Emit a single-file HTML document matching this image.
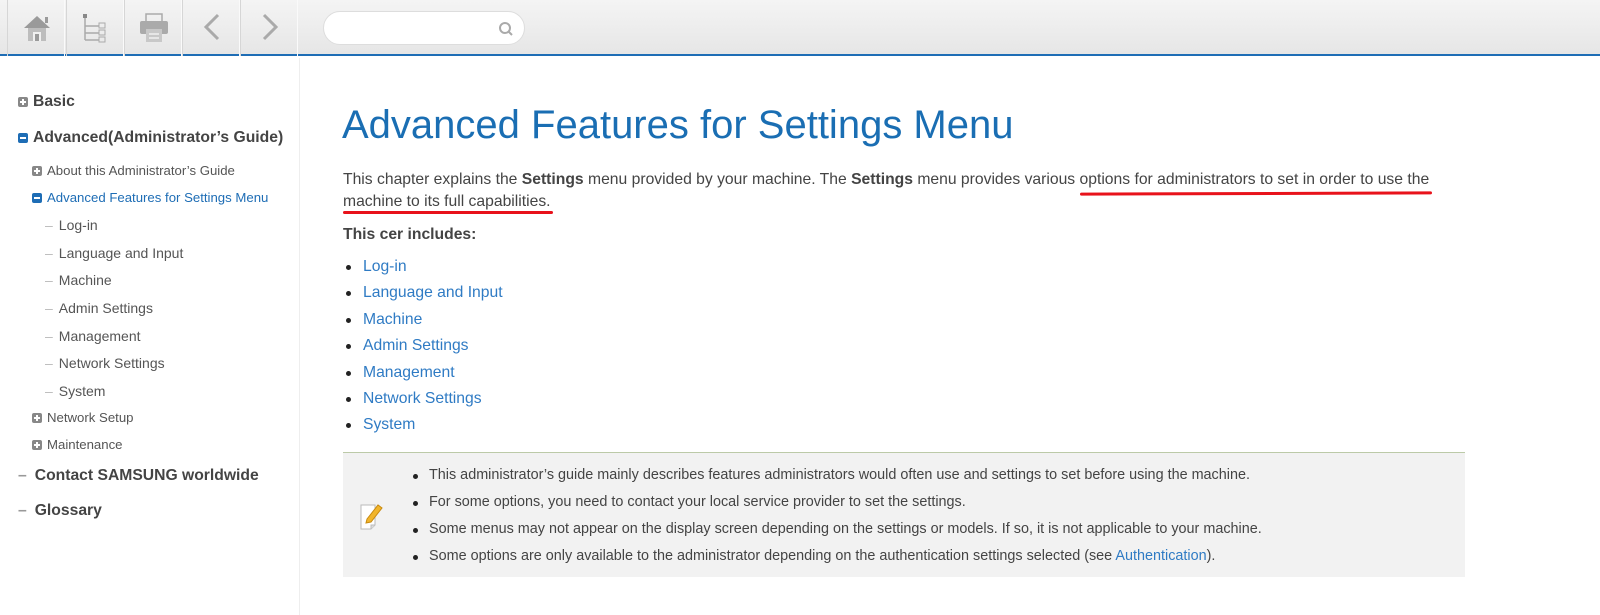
<!DOCTYPE html>
<html><head><meta charset="utf-8"><style>
*{margin:0;padding:0;box-sizing:border-box}
body{width:1600px;height:615px;overflow:hidden;background:#fff;font-family:"Liberation Sans",Arial,sans-serif;color:#444;position:relative}
.tb{position:absolute;left:0;top:0;width:1600px;height:56px;background:linear-gradient(#f4f4f4,#e6e6e6);border-bottom:2px solid #1e6db5}
.btn{position:absolute;top:0;height:56px;width:58px;border-left:1px solid #d6d6d6;border-right:1px solid #fafafa}
.btn svg{position:absolute;left:13px;top:11px}
.search{position:absolute;left:323px;top:11px;width:202px;height:34px;border-radius:17px;background:#fff;border:1px solid #ddd}
.side{position:absolute;left:0;top:58px;width:300px;height:557px;border-right:1px solid #eee}
.it{position:absolute;white-space:nowrap}
.b{font-weight:bold;font-size:15.7px;color:#444}
.s{font-size:13.2px;color:#555}
.ico{display:inline-block;width:10px;height:10px;border-radius:2px;background:#888;position:relative;margin-right:5px;vertical-align:-1px}
.ico:after{content:"";position:absolute;left:2px;top:4px;width:6px;height:2px;background:#fff}
.plus:before{content:"";position:absolute;left:4px;top:2px;width:2px;height:6px;background:#fff}
.blue{background:#1e6db5}
h1{position:absolute;left:342px;top:103px;font-size:40px;font-weight:normal;color:#1a6eb3;white-space:nowrap}
.p{position:absolute;left:343px;font-size:15.7px;color:#444;white-space:nowrap}
a{color:#2f7bc4;text-decoration:none}
ul.l{position:absolute;left:343px;top:257px;list-style:none;font-size:15.7px}
ul.l li{height:26.4px;line-height:20px;position:relative;padding-left:20px}
ul.l li:before{content:"";position:absolute;left:3px;top:8px;width:5px;height:5px;border-radius:50%;background:#222}
.note{position:absolute;left:343px;top:452px;width:1122px;height:125px;background:#f2f2f2;border-top:1px solid #bccaa8}
.note ul{position:absolute;left:68px;top:14px;list-style:none;font-size:14.4px;color:#444}
.note li{height:27px;position:relative;padding-left:18px;white-space:nowrap}
.note li:before{content:"";position:absolute;left:2px;top:7px;width:5px;height:5px;border-radius:50%;background:#222}
.red{position:absolute;height:3px;background:#e8121b;border-radius:2px}
</style></head><body>
<div class="tb">
<div class="btn" style="left:7px"><svg width="32" height="34" viewBox="0 0 32 34"><path d="M3 17 L16 5 L29 17 Z" fill="#9a9a9a"/><rect x="24" y="6" width="3" height="6" fill="#9a9a9a"/><rect x="7" y="17" width="18" height="13" fill="#bdbdbd"/><rect x="12" y="21" width="8" height="9" fill="#f0f0f0"/><rect x="14" y="23" width="4" height="7" fill="#9a9a9a"/></svg></div>
<div class="btn" style="left:66px"><svg width="32" height="34" viewBox="0 0 32 34"><rect x="3" y="3" width="4" height="4" fill="#888"/><path d="M5 7V29M5 15H19M5 22H19M5 29H19" stroke="#aaa" stroke-width="1.5" fill="none"/><rect x="19" y="12" width="6" height="5" fill="none" stroke="#aaa"/><rect x="19" y="19" width="6" height="5" fill="none" stroke="#aaa"/><rect x="19" y="26" width="6" height="5" fill="none" stroke="#aaa"/></svg></div>
<div class="btn" style="left:124px"><svg width="32" height="34" viewBox="0 0 32 34"><rect x="8" y="3" width="16" height="8" fill="none" stroke="#aaa" stroke-width="1.5"/><rect x="2" y="10" width="28" height="13" rx="2" fill="#aaa"/><rect x="8" y="18" width="16" height="13" fill="#c8c8c8"/><path d="M11 23H21M11 27H21" stroke="#f0f0f0" stroke-width="1.5"/></svg></div>
<div class="btn" style="left:182px"><svg width="32" height="34" viewBox="0 0 32 34"><path d="M22 4 L10 16 L22 28" stroke="#aaa" stroke-width="3" fill="none"/></svg></div>
<div class="btn" style="left:240px"><svg width="32" height="34" viewBox="0 0 32 34"><path d="M10 4 L22 16 L10 28" stroke="#aaa" stroke-width="3" fill="none"/></svg></div>
<div class="search"><svg style="position:absolute;right:10px;top:9px" width="16" height="16" viewBox="0 0 16 16"><circle cx="7" cy="7" r="5" stroke="#aaa" stroke-width="2" fill="none"/><path d="M11 11L14 14" stroke="#aaa" stroke-width="2"/></svg></div>
</div>
<div class="side">
<div class="it b" style="left:18px;top:35px"><span class="ico plus"></span>Basic</div>
<div class="it b" style="left:18px;top:71px"><span class="ico blue"></span>Advanced(Administrator’s Guide)</div>
<div class="it s" style="left:32px;top:105px"><span class="ico plus"></span>About this Administrator’s Guide</div>
<div class="it s" style="left:32px;top:132px;color:#1e6db5"><span class="ico blue"></span>Advanced Features for Settings Menu</div>
<div class="it s" style="left:45px;top:159px;font-size:14px"><span style="color:#bbb;margin-right:6px">–</span>Log-in</div>
<div class="it s" style="left:45px;top:187px;font-size:14px"><span style="color:#bbb;margin-right:6px">–</span>Language and Input</div>
<div class="it s" style="left:45px;top:214px;font-size:14px"><span style="color:#bbb;margin-right:6px">–</span>Machine</div>
<div class="it s" style="left:45px;top:242px;font-size:14px"><span style="color:#bbb;margin-right:6px">–</span>Admin Settings</div>
<div class="it s" style="left:45px;top:270px;font-size:14px"><span style="color:#bbb;margin-right:6px">–</span>Management</div>
<div class="it s" style="left:45px;top:297px;font-size:14px"><span style="color:#bbb;margin-right:6px">–</span>Network Settings</div>
<div class="it s" style="left:45px;top:325px;font-size:14px"><span style="color:#bbb;margin-right:6px">–</span>System</div>
<div class="it s" style="left:32px;top:352px"><span class="ico plus"></span>Network Setup</div>
<div class="it s" style="left:32px;top:379px"><span class="ico plus"></span>Maintenance</div>
<div class="it b" style="left:18px;top:409px"><span style="color:#999;margin-right:8px">–</span>Contact SAMSUNG worldwide</div>
<div class="it b" style="left:18px;top:444px"><span style="color:#999;margin-right:8px">–</span>Glossary</div>
</div>
<h1>Advanced Features for Settings Menu</h1>
<div class="p" style="top:171px">This chapter explains the <b>Settings</b> menu provided by your machine. The <b>Settings</b> menu provides various options for administrators to set in order to use the</div>
<div class="p" style="top:193px">machine to its full capabilities.</div>
<div class="red" style="left:1080px;top:192px;width:352px;transform:rotate(-0.2deg)"></div>
<div class="red" style="left:343px;top:211px;width:210px"></div>
<div class="p" style="top:226px;font-weight:bold">This cer includes:</div>
<ul class="l">
<li><a>Log-in</a></li><li><a>Language and Input</a></li><li><a>Machine</a></li><li><a>Admin Settings</a></li><li><a>Management</a></li><li><a>Network Settings</a></li><li><a>System</a></li>
</ul>
<div class="note">
<svg style="position:absolute;left:16px;top:48px" width="28" height="30" viewBox="0 0 28 30"><path d="M2 4H16V24L12 28H2Z" fill="#fff" stroke="#bbb"/><path d="M12 28V24H16" fill="#ddd" stroke="#bbb"/><path d="M8 18L19 4L23 7L12 21L7 22Z" fill="#f1b52c" stroke="#c88a10"/></svg>
<ul>
<li>This administrator’s guide mainly describes features administrators would often use and settings to set before using the machine.</li>
<li>For some options, you need to contact your local service provider to set the settings.</li>
<li>Some menus may not appear on the display screen depending on the settings or models. If so, it is not applicable to your machine.</li>
<li>Some options are only available to the administrator depending on the authentication settings selected (see <a>Authentication</a>).</li>
</ul>
</div>
</body></html>
